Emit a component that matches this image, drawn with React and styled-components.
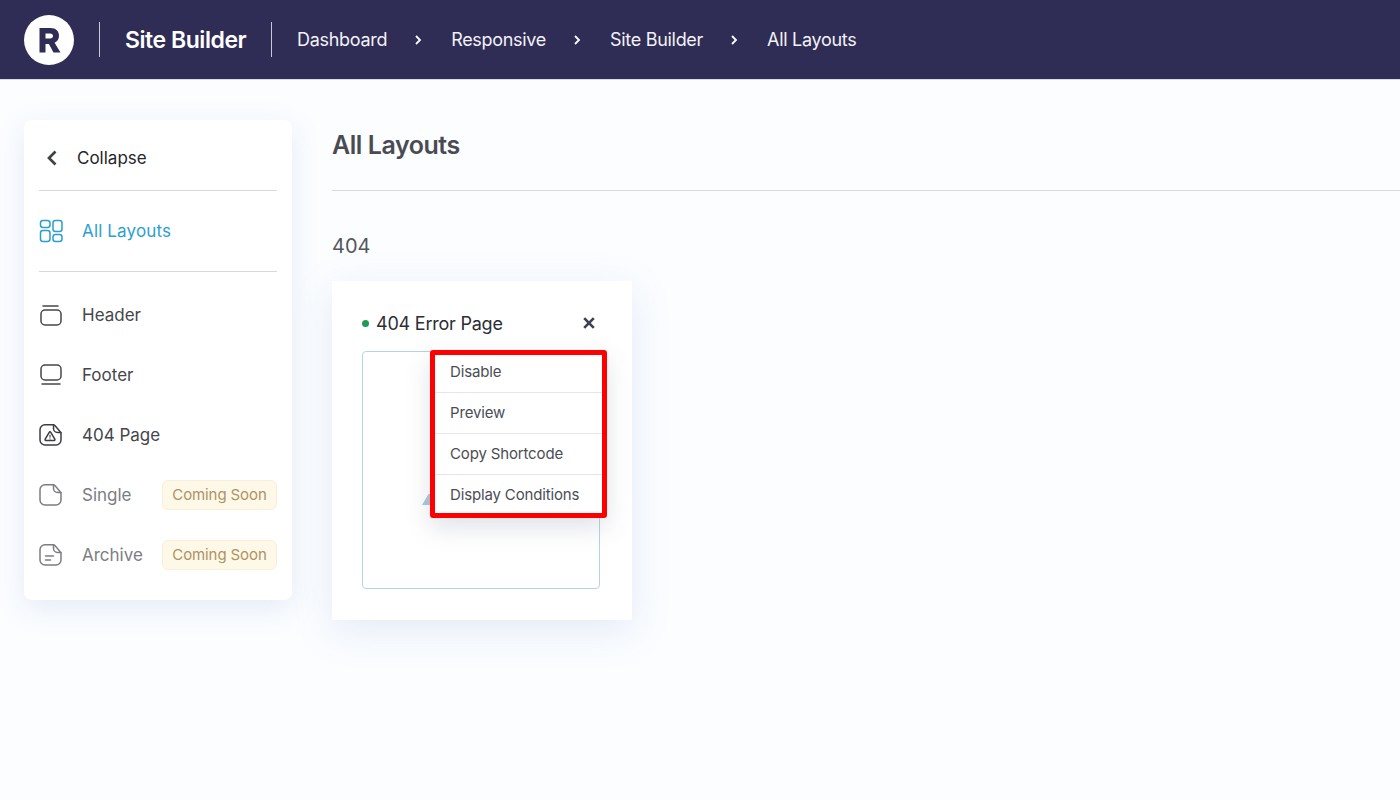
import React from 'react';
import styled, { createGlobalStyle } from 'styled-components';

const Global = createGlobalStyle`
  html, body { margin: 0; padding: 0; background: #fbfdff; }
  body { font-family: "Inter", "Liberation Sans", sans-serif; color: #3f4148; }
  * { box-sizing: border-box; }
`;

const Page = styled.div`
  width: 1400px;
  height: 800px;
  overflow: hidden;
`;

const TopBar = styled.header`
  height: 80px;
  background: #2f2c55;
  border-bottom: 1px solid #d6d9e8;
  display: flex;
  align-items: center;
  padding-left: 24px;
  color: #fff;
`;

const Logo = styled.div`
  width: 50px;
  height: 50px;
  margin-right: 25px;
  border-radius: 50%;
  background: #fff;
  display: flex;
  align-items: center;
  justify-content: center;
`;

const Divider = styled.span`
  width: 1px;
  height: 35px;
  background: #c9c9d6;
`;

const SiteTitle = styled.div`
  font-size: 23px;
  font-weight: 600;
  letter-spacing: -0.45px;
  width: 171px;
  padding-left: 25px;
`;

const Crumbs = styled.nav`
  display: flex;
  align-items: center;
  padding-left: 25px;
`;

const Crumb = styled.span`
  font-size: 18px;
  letter-spacing: -0.3px;
  color: #f2f2f6;
`;

const CrumbArrow = styled.svg`
  width: 10px;
  height: 12px;
  margin: 0 28px 0 26px;
`;

const Body = styled.div`
  display: flex;
  align-items: flex-start;
  padding: 40px 0 0 24px;
  gap: 40px;
`;

const Sidebar = styled.aside`
  width: 268px;
  height: 480px;
  background: #fff;
  border-radius: 8px;
  padding: 0 15px;
  box-shadow: 0 8px 28px rgba(120, 150, 200, 0.16);
`;

const CollapseRow = styled.div`
  height: 71px;
  display: flex;
  align-items: center;
  gap: 18px;
  padding: 6px 0 0 6px;
  border-bottom: 1px solid #d9d9d9;
  font-size: 17px;
  color: #24262b;
`;

const ActiveSection = styled.div`
  height: 81px;
  display: flex;
  align-items: center;
  border-bottom: 1px solid #d9d9d9;
  margin-bottom: 13px;
`;

const NavItem = styled.div`
  height: 60px;
  display: flex;
  align-items: center;
`;

const ActiveItem = styled(NavItem)`
  height: auto;
`;

const NavIcon = styled.svg`
  width: 24px;
  height: 24px;
  margin-right: 19px;
  flex: none;
  color: ${p => p.$color || '#45464c'};
`;

const NavLabel = styled.span`
  font-size: 17px;
  letter-spacing: ${p => p.$spacing || '0'};
  color: ${p => p.$color || '#45464c'};
`;

const SoonBadge = styled.span`
  margin-left: auto;
  width: 115px;
  height: 30px;
  padding-bottom: 1px;
  display: flex;
  align-items: center;
  justify-content: center;
  font-size: 15px;
  letter-spacing: -0.1px;
  color: #b0925f;
  background: #fdf8e8;
  border: 1px solid #f7efd6;
  border-radius: 6px;
`;

const Main = styled.main`
  flex: 1;
`;

const PageTitle = styled.h1`
  margin: 0;
  height: 71px;
  padding-top: 8px;
  font-size: 25px;
  line-height: 34px;
  font-weight: 600;
  letter-spacing: -0.45px;
  color: #4a4b52;
  border-bottom: 1px solid #d9d9d9;
`;

const GroupTitle = styled.h2`
  margin: 42px 0 22px;
  font-size: 20px;
  line-height: 26px;
  font-weight: 400;
  color: #55565c;
`;

const Card = styled.section`
  position: relative;
  width: 300px;
  height: 339px;
  padding: 30px;
  background: #fff;
  box-shadow: 0 10px 36px rgba(120, 150, 200, 0.17);
`;

const CardHead = styled.div`
  display: flex;
  align-items: center;
  height: 24px;
  margin: 0 6px 16px 0;
`;

const StatusDot = styled.span`
  width: 7px;
  height: 7px;
  border-radius: 50%;
  background: #1d9a55;
  margin-right: 8px;
`;

const CardName = styled.span`
  flex: 1;
  margin-left: -1px;
  font-size: 18px;
  letter-spacing: -0.22px;
  color: #2c2e35;
`;

const CloseIcon = styled.svg`
  width: 14px;
  height: 14px;
`;

const Preview = styled.div`
  position: relative;
  width: 238px;
  height: 238px;
  border: 1px solid #b4d5e3;
  border-radius: 4px;
  background: #fff;
`;

const PreviewMark = styled.svg`
  position: absolute;
  left: 59px;
  top: 142px;
  width: 9px;
  height: 11px;
`;

const Menu = styled.ul`
  position: absolute;
  left: 98px;
  top: 69px;
  width: 177px;
  height: 168px;
  margin: 0;
  padding: 1px 0 0;
  list-style: none;
  background: #fff;
  border-radius: 3px;
  outline: 5px solid #ff0000;
  outline-offset: -5px;
  box-shadow: 0 10px 24px rgba(90, 100, 130, 0.18);
`;

const MenuItem = styled.li`
  height: 41px;
  display: flex;
  align-items: center;
  padding-left: 20px;
  font-size: 15px;
  letter-spacing: -0.15px;
  color: #4b4d55;
  & + & {
    border-top: 1px solid #e4e6ea;
    padding-bottom: 2px;
  }
`;

const MUTED = '#7c7d83';

const stroke = { fill: 'none', stroke: 'currentColor', strokeWidth: 1.5, strokeLinecap: 'round', strokeLinejoin: 'round' };

const Arrow = () => (
  <CrumbArrow viewBox="0 0 10 12">
    <path d="M3 2l4 4-4 4" fill="none" stroke="#fff" strokeWidth="1.8" />
  </CrumbArrow>
);

const HeaderIcon = () => (
  <NavIcon viewBox="0 0 24 24" {...stroke}>
    <path d="M4 3h15" />
    <rect x="2" y="7" width="20" height="15" rx="4" />
  </NavIcon>
);

const FooterIcon = () => (
  <NavIcon viewBox="0 0 24 24" {...stroke}>
    <rect x="2" y="2" width="20" height="15" rx="4" />
    <path d="M3 21h18" />
  </NavIcon>
);

const sheet = 'M6 1.8h8.2c.7 0 1.3.3 1.7.8l5.3 6.2c.5.5.8 1.1.8 1.8V17a5 5 0 0 1-5 5H6a5 5 0 0 1-5-5V6.8a5 5 0 0 1 5-5z';
const fold = 'M14.5 2v3.5a4 4 0 0 0 4 4H22';

const PageIcon = () => (
  <NavIcon viewBox="0 0 24 24" {...stroke} $color="#3c3d43">
    <path d={sheet} />
    <path d={fold} />
    <path d="M10.2 9.3L6.2 16.2c-.4.7 0 1.3.7 1.3h8.2c.7 0 1.1-.6.7-1.3l-4-6.9c-.4-.7-1.2-.7-1.6 0z" />
    <path d="M11 12v2.3M11 15.9v.1" strokeWidth="1.1" />
  </NavIcon>
);

const SingleIcon = () => (
  <NavIcon viewBox="0 0 24 24" {...stroke} $color={MUTED}>
    <path d={sheet} />
    <path d={fold} />
  </NavIcon>
);

const ArchiveIcon = () => (
  <NavIcon viewBox="0 0 24 24" {...stroke} $color={MUTED}>
    <path d={sheet} />
    <path d={fold} />
    <path d="M6.5 13h8M6.5 17h5" />
  </NavIcon>
);

export default function App() {
  return (
    <Page>
      <Global />
      <TopBar>
        <Logo>
          <svg width="24" height="26" viewBox="0 0 24 26">
            <path fillRule="evenodd" fill="#2f2c55" d="M2.5 1H13.5c5.5 0 8.5 3.2 8.5 7.8 0 3.3-1.6 5.7-4.4 7L23.5 25.5H16.5l-4.6-8.5H8.5v8.5H2.5zM8.5 6.5V11.5H13c1.9 0 3-1 3-2.5s-1.1-2.5-3-2.5z" />
          </svg>
        </Logo>
        <Divider />
        <SiteTitle>Site Builder</SiteTitle>
        <Divider />
        <Crumbs>
          <Crumb>Dashboard</Crumb>
          <Arrow />
          <Crumb>Responsive</Crumb>
          <Arrow />
          <Crumb>Site Builder</Crumb>
          <Arrow />
          <Crumb>All Layouts</Crumb>
        </Crumbs>
      </TopBar>
      <Body>
        <Sidebar>
          <CollapseRow>
            <svg width="14" height="18" viewBox="0 0 14 18">
              <path d="M10.5 2.5L4 9l6.5 6.5" fill="none" stroke="#3f4148" strokeWidth="2.7" />
            </svg>
            Collapse
          </CollapseRow>
          <ActiveSection>
            <ActiveItem>
              <NavIcon viewBox="0 0 24 24" $color="#2b9fd0" {...stroke}>
                <rect x="1.5" y="1.5" width="9.5" height="7" rx="2.5" />
                <rect x="14" y="1.5" width="9" height="11" rx="2.5" />
                <rect x="1.5" y="11.5" width="9.5" height="11" rx="2.5" />
                <rect x="14" y="15.5" width="9" height="7" rx="2.5" />
              </NavIcon>
              <NavLabel $color="#2b9fd0" $spacing="0.15px">All Layouts</NavLabel>
            </ActiveItem>
          </ActiveSection>
          <NavItem><HeaderIcon /><NavLabel>Header</NavLabel></NavItem>
          <NavItem><FooterIcon /><NavLabel>Footer</NavLabel></NavItem>
          <NavItem><PageIcon /><NavLabel>404 Page</NavLabel></NavItem>
          <NavItem><SingleIcon /><NavLabel $color={MUTED}>Single</NavLabel><SoonBadge>Coming Soon</SoonBadge></NavItem>
          <NavItem><ArchiveIcon /><NavLabel $color={MUTED}>Archive</NavLabel><SoonBadge>Coming Soon</SoonBadge></NavItem>
        </Sidebar>
        <Main>
          <PageTitle>All Layouts</PageTitle>
          <GroupTitle>404</GroupTitle>
          <Card>
            <CardHead>
              <StatusDot />
              <CardName>404 Error Page</CardName>
              <CloseIcon viewBox="0 0 14 14">
                <path d="M2.2 2.2l9.6 9.6M11.8 2.2l-9.6 9.6" stroke="#3c4152" strokeWidth="2.6" fill="none" />
              </CloseIcon>
            </CardHead>
            <Preview>
              <PreviewMark viewBox="0 0 9 11">
                <path d="M0 11L6.5 0H9v11z" fill="#a9c8d8" />
              </PreviewMark>
            </Preview>
            <Menu>
              <MenuItem>Disable</MenuItem>
              <MenuItem>Preview</MenuItem>
              <MenuItem>Copy Shortcode</MenuItem>
              <MenuItem>Display Conditions</MenuItem>
            </Menu>
          </Card>
        </Main>
      </Body>
    </Page>
  );
}
